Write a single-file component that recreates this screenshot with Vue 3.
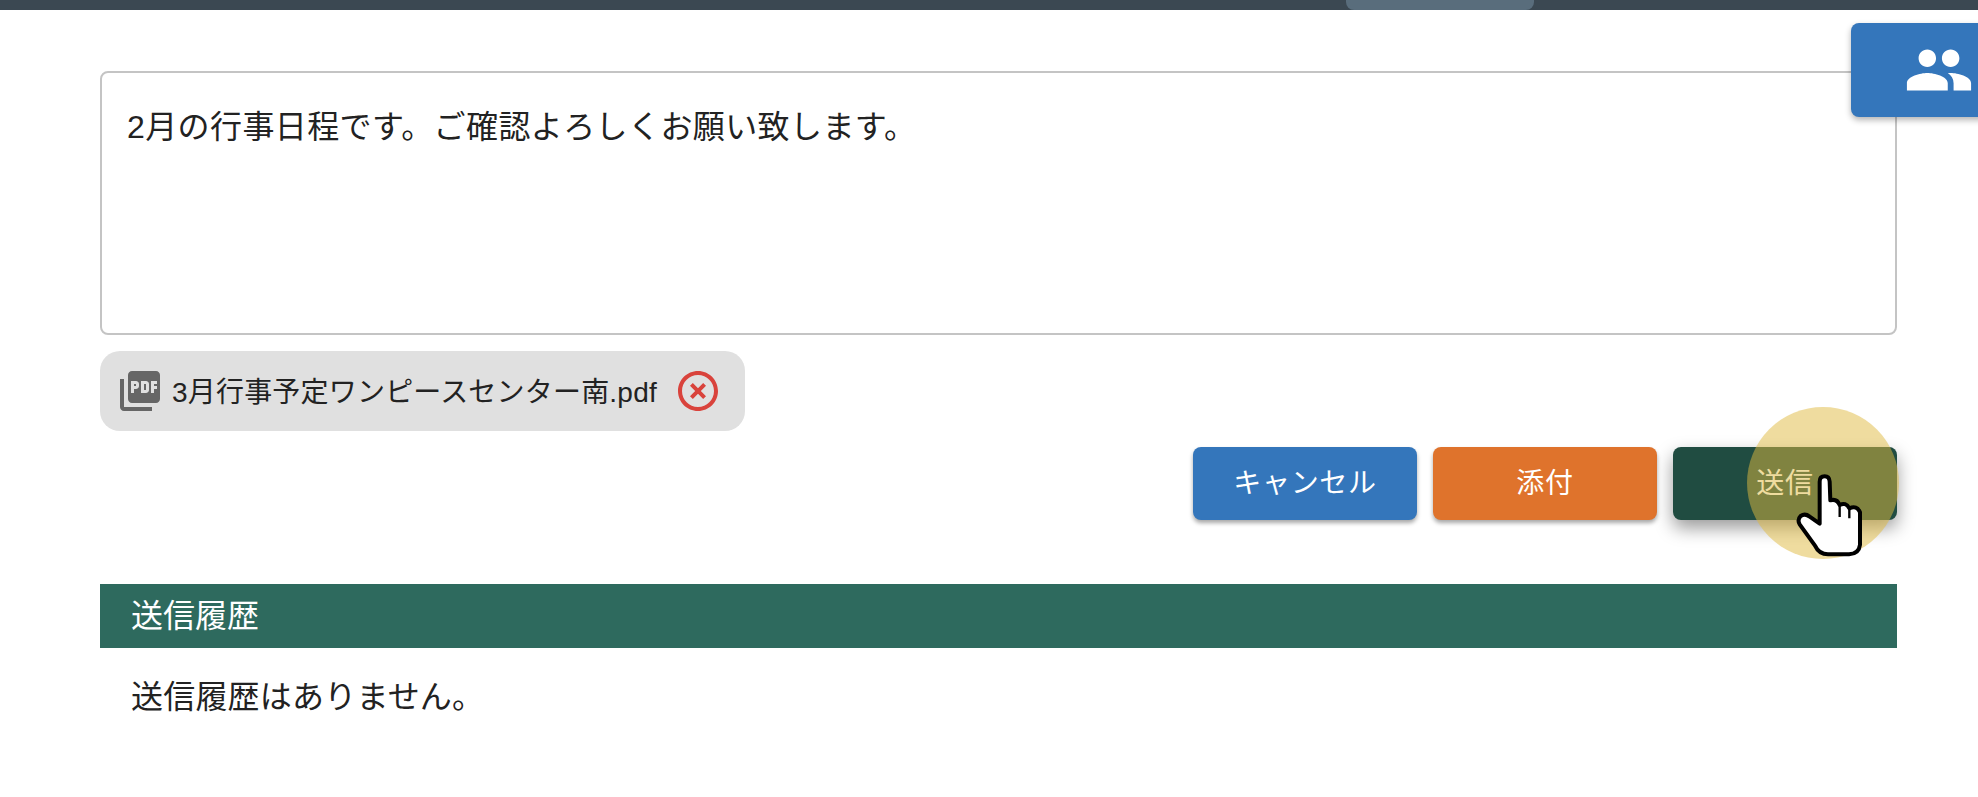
<script setup>
const message = '2月の行事日程です。ご確認よろしくお願い致します。'
const fileName = '3月行事予定ワンピースセンター南.pdf'
</script>

<template>
  <div class="page">
    <header class="topbar"><div class="tab"></div></header>

    <button class="side" type="button" aria-label="members">
      <svg class="people" viewBox="0 0 24 24" fill="#fff">
        <path d="M16 11c1.66 0 2.99-1.34 2.99-3S17.66 5 16 5c-1.66 0-3 1.34-3 3s1.34 3 3 3zm-8 0c1.66 0 2.99-1.34 2.99-3S9.66 5 8 5C6.34 5 5 6.34 5 8s1.34 3 3 3zm0 2c-2.33 0-7 1.17-7 3.5V19h14v-2.5c0-2.33-4.67-3.5-7-3.5zm8 0c-.29 0-.62.02-.97.05 1.16.84 1.97 1.97 1.97 3.45V19h6v-2.5c0-2.33-4.67-3.5-7-3.5z" />
      </svg>
    </button>

    <main class="main">
      <textarea class="input" readonly :value="message"></textarea>

      <div class="chip">
        <svg class="chip-icon" viewBox="0 0 24 24" fill="#666">
          <path d="M20 2H8c-1.1 0-2 .9-2 2v12c0 1.1.9 2 2 2h12c1.1 0 2-.9 2-2V4c0-1.1-.9-2-2-2zm-8.500 7.500c0 .83-.67 1.500-1.500 1.500H9v2H7.500V7H10c.83 0 1.500.67 1.500 1.500v1zm5 2c0 .83-.67 1.500-1.500 1.500h-2.500V7H15c.83 0 1.500.67 1.500 1.500v3zm4-3H19v1h1.500V11H19v2h-1.500V7h3v1.500zM9 9.500h1v-1H9v1zM4 6H2v14c0 1.100.9 2 2 2h14v-2H4V6zm10 5.500h1v-3h-1v3z" />
        </svg>
        <span class="chip-name">{{ fileName }}</span>
        <svg class="chip-icon close" viewBox="0 0 24 24" fill="#d9433c">
          <path d="M14.590 8L12 10.590 9.410 8 8 9.410 10.590 12 8 14.590 9.410 16 12 13.410 14.590 16 16 14.590 13.410 12 16 9.410 14.590 8zM12 2C6.470 2 2 6.470 2 12s4.470 10 10 10 10-4.470 10-10S17.530 2 12 2zm0 18c-4.410 0-8-3.590-8-8s3.590-8 8-8 8 3.590 8 8-3.590 8-8 8z" />
        </svg>
      </div>

      <div class="actions">
        <button class="btn blue" type="button">キャンセル</button>
        <button class="btn orange" type="button">添付</button>
        <button class="btn green" type="button">
          送信
          <span class="spot"></span>
          <svg class="hand" viewBox="220 220 220 260">
            <path d="M300 246Q300 230 315 230Q329 230 330 246L332 302Q352 296 360 316Q378 306 389 326Q412 316 421 338L421 435Q418 462 388 464L325 464Q298 464 286 438L240 374Q232 360 243 349Q256 340 270 351L300 372Z" fill="#fff" stroke="#000" stroke-width="12" stroke-linejoin="round" />
            <path d="M360 316L360 352M389 326L389 356" fill="none" stroke="#000" stroke-width="7" />
          </svg>
        </button>
      </div>

      <section class="history">
        <h2 class="history-title">送信履歴</h2>
        <p class="history-empty">送信履歴はありません。</p>
      </section>
    </main>
  </div>
</template>

<style scoped>
.page {
  position: relative;
  width: 1978px;
  height: 797px;
  overflow: hidden;
  background: #fff;
  color: #222;
  font-family: "Liberation Sans", "Noto Sans CJK JP", sans-serif;
}
.topbar {
  height: 10px;
  background: #3b4852;
  display: flex;
  padding-left: 1346px;
}
.tab {
  width: 188px;
  height: 10px;
  background: #596d7c;
  border-radius: 0 0 8px 8px;
}
.side {
  position: absolute;
  left: 1851px;
  top: 23px;
  width: 140px;
  height: 94px;
  border: 0;
  padding: 0 0 0 53px;
  display: flex;
  align-items: center;
  background: #3476bb;
  border-radius: 8px;
  box-shadow: 0 3px 6px rgba(0, 0, 0, 0.3);
  z-index: 2;
}
.people {
  width: 70px;
  height: 70px;
  flex: none;
}
.main {
  padding: 61px 81px 0 100px;
  display: flex;
  flex-direction: column;
}
.input {
  display: block;
  box-sizing: border-box;
  width: 100%;
  height: 264px;
  padding: 34px 25px;
  border: 2px solid #c4c4c4;
  border-radius: 8px;
  outline: none;
  resize: none;
  color: #222;
  letter-spacing: 0.4px;
  font: 32px/40px "Liberation Sans", "Noto Sans CJK JP", sans-serif;
}
.chip {
  box-sizing: border-box;
  margin-top: 16px;
  width: 645px;
  height: 80px;
  padding-left: 16px;
  display: flex;
  align-items: center;
  background: #e0e0e0;
  border-radius: 20px;
}
.chip-icon {
  width: 48px;
  height: 48px;
  flex: none;
}
.chip-name {
  margin-left: 8px;
  padding-bottom: 2px;
  font-size: 28px;
  letter-spacing: 0.2px;
  white-space: nowrap;
  color: #222;
}
.close {
  margin-left: auto;
  margin-right: 23px;
}
.actions {
  margin-top: 16px;
  display: flex;
  justify-content: flex-end;
  gap: 16px;
}
.btn {
  position: relative;
  width: 224px;
  height: 73px;
  border: 0;
  padding: 0 0 6px;
  border-radius: 8px;
  color: #fff;
  letter-spacing: 0.7px;
  font: 28px "Liberation Sans", "Noto Sans CJK JP", sans-serif;
  box-shadow: 0 3px 4px rgba(0, 0, 0, 0.35);
}
.blue { background: #3476bb; }
.orange { background: #df732c; }
.green {
  background: #204c41;
  box-shadow: 0 8px 18px rgba(0, 0, 0, 0.4);
}
.spot {
  position: absolute;
  left: 74px;
  top: -40px;
  width: 152px;
  height: 152px;
  border-radius: 50%;
  background: rgba(223, 185, 63, 0.5);
}
.hand {
  position: absolute;
  left: 120.330px;
  top: 26.330px;
  width: 73.330px;
  height: 86.670px;
}
.history {
  margin-top: 64px;
}
.history-title {
  margin: 0;
  height: 64px;
  padding-left: 31px;
  background: #2e6a5e;
  color: #fff;
  font-size: 32px;
  font-weight: 400;
  line-height: 64px;
}
.history-empty {
  margin: 29px 0 0;
  padding-left: 31px;
  font-size: 32px;
  letter-spacing: 0.2px;
  line-height: 40px;
}
</style>
